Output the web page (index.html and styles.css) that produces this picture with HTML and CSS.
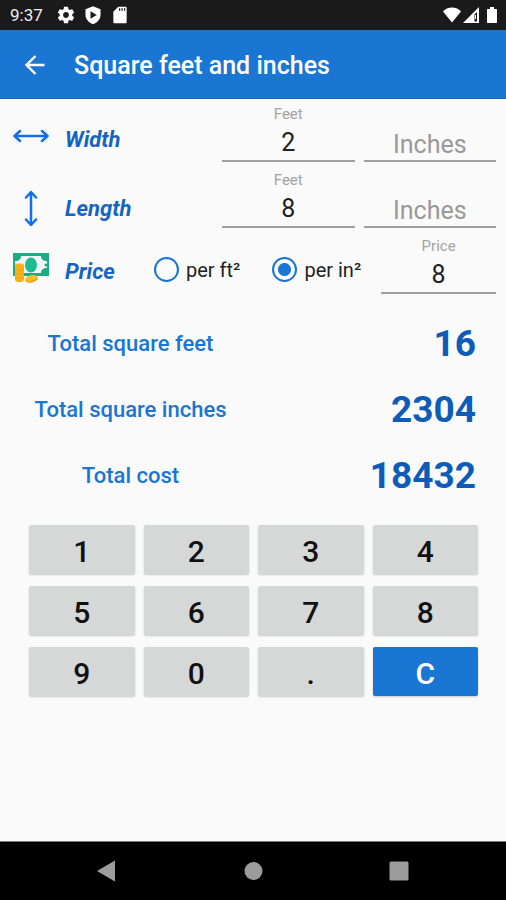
FILE: index.html
```html
<!DOCTYPE html>
<html lang="en">
<head>
<meta charset="utf-8">
<meta name="viewport" content="width=device-width, initial-scale=1">
<title>Square feet and inches</title>
<link rel="stylesheet" href="styles.css">
</head>
<body>
<div class="status">
  <span class="clock">9:37</span>
  <svg width="20" height="20" viewBox="0 0 24 24" fill="#fff" aria-hidden="true"><path d="M19.43 12.98c.04-.32.07-.64.07-.98s-.03-.66-.07-.98l2.11-1.65c.19-.15.24-.42.12-.64l-2-3.46c-.12-.22-.39-.3-.61-.22l-2.49 1c-.52-.4-1.08-.73-1.69-.98l-.38-2.65C14.46 2.18 14.25 2 14 2h-4c-.25 0-.46.18-.49.42l-.38 2.65c-.61.25-1.17.59-1.69.98l-2.49-1c-.23-.09-.49 0-.61.22l-2 3.46c-.13.22-.07.49.12.64l2.11 1.65c-.04.32-.07.65-.07.98s.03.66.07.98l-2.11 1.65c-.19.15-.24.42-.12.64l2 3.46c.12.22.39.3.61.22l2.49-1c.52.4 1.08.73 1.69.98l.38 2.65c.03.24.24.42.49.42h4c.25 0 .46-.18.49-.42l.38-2.65c.61-.25 1.17-.59 1.69-.98l2.49 1c.23.09.49 0 .61-.22l2-3.46c.12-.22.07-.49-.12-.64l-2.11-1.65zM12 15.500c-1.930 0-3.500-1.570-3.500-3.500s1.570-3.500 3.500-3.500 3.500 1.570 3.500 3.500-1.570 3.500-3.500 3.500z"/></svg>
  <svg width="20" height="20" viewBox="0 0 24 24" aria-hidden="true"><path fill="#fff" d="M12 1.500 3 5v7c0 5 3.800 9.200 9 11 5.200-1.800 9-6 9-11V5z"/><path fill="#1a1a1a" d="M9 7.500v9l7.500-4.500z"/></svg>
  <svg width="20" height="20" viewBox="0 0 24 24" aria-hidden="true"><path fill="#fff" d="M18.500 2H10L4 8v12.500c0 1 .8 1.500 1.700 1.500h12.800c.9 0 1.500-.6 1.500-1.500v-17c0-.9-.6-1.500-1.500-1.500z"/><path stroke="#1a1a1a" stroke-width="1.500" d="M11.500 4v3M14.500 4v3M17.500 4v3"/></svg>
  <span class="signals">
    <svg width="20" height="18" viewBox="0 0 20 18" aria-hidden="true"><path fill="#fff" d="M10 16.500 1 5.500C3 3 6.500 1.500 10 1.500S17 3 19 5.500z"/></svg>
    <svg width="17" height="18" viewBox="0 0 17 18" aria-hidden="true"><path fill="#fff" d="M0 17 16 1v16z"/><path fill="#1a1a1a" d="M11.500 8.500 14 6v9.500h-2.500z"/><path fill="#fff" d="M12 9h1v4h-1z"/></svg>
    <svg width="12" height="18" viewBox="0 0 12 18" aria-hidden="true"><path fill="#fff" d="M4 1h4v2h2c.6 0 1 .4 1 1v12c0 .6-.4 1-1 1H2c-.6 0-1-.4-1-1V4c0-.6.4-1 1-1h2z"/></svg>
  </span>
</div>

<header class="appbar">
  <button class="back" type="button" aria-label="Back">
    <svg width="20" height="20" viewBox="0 0 20 20" fill="none" stroke="#fff" stroke-width="2.400" aria-hidden="true"><path d="M19.500 10H2M10.500 1 1.500 10l9 9"/></svg>
  </button>
  <h1>Square feet and inches</h1>
</header>

<main>
  <form class="dimensions">
    <div class="row">
      <div class="head">
        <svg class="icon" viewBox="0 0 36 36" fill="none" stroke="#1070f0" stroke-width="2.500" stroke-linecap="round" stroke-linejoin="round" aria-hidden="true"><path d="M2 15h32M7 10l-5.500 5L7 20M29 10l5.500 5L29 20"/></svg>
        <h2>Width</h2>
      </div>
      <div class="field">
        <label for="wf">Feet</label>
        <input id="wf" type="text" value="2">
      </div>
      <div class="field">
        <input id="wi" class="empty" type="text" placeholder="Inches" aria-label="Width in inches">
      </div>
    </div>
    <div class="row row-length">
      <div class="head">
        <svg class="icon" viewBox="0 0 36 36" fill="none" stroke="#1070f0" stroke-width="2.500" stroke-linecap="round" stroke-linejoin="round" aria-hidden="true"><path d="M18 3v31M13 7.500l5-5.500 5 5.500M13 29.500l5 5.500 5-5.500"/></svg>
        <h2>Length</h2>
      </div>
      <div class="field">
        <label for="lf">Feet</label>
        <input id="lf" type="text" value="8">
      </div>
      <div class="field">
        <input id="li" class="empty" type="text" placeholder="Inches" aria-label="Length in inches">
      </div>
    </div>
    <div class="row row-price">
      <div class="head">
        <svg class="icon" viewBox="0 0 36 36" aria-hidden="true"><path fill="#1cab83" d="M0 0h36v23H0z"/><path fill="#f2f5f7" d="M8 3h20c0 3 2 5 6 5v7c-4 0-6 2-6 5H8c0-3-2-5-6-5V8c4 0 6-2 6-5z"/><ellipse cx="18" cy="12" rx="6" ry="7.500" fill="#1cbb90"/><circle cx="33" cy="12" r="1.500" fill="#1cab83"/><path fill="#fbb017" d="M2 12c1-2 8-2 9 0v15c-1 3-8 3-9 0z"/><path fill="none" stroke="#f3a213" d="M2 16c2 1.500 7 1.500 9 0M2 20c2 1.500 7 1.500 9 0M2 24c2 1.500 7 1.500 9 0"/><ellipse cx="18.500" cy="26" rx="6.500" ry="3.500" fill="#f3a213" transform="rotate(-14 18.500 26)"/><ellipse cx="18" cy="25" rx="6" ry="2.500" fill="#fdbf2d" transform="rotate(-14 18 25)"/></svg>
        <h2>Price</h2>
      </div>
      <div class="units">
        <label><input type="radio" name="unit">per ft²</label>
        <label><input type="radio" name="unit" checked>per in²</label>
      </div>
      <div class="field">
        <label for="pr">Price</label>
        <input id="pr" type="text" value="8">
      </div>
    </div>
  </form>

  <dl class="totals">
    <div><dt>Total square feet</dt><dd>16</dd></div>
    <div><dt>Total square inches</dt><dd>2304</dd></div>
    <div><dt>Total cost</dt><dd>18432</dd></div>
  </dl>

  <div class="keypad">
    <button type="button">1</button>
    <button type="button">2</button>
    <button type="button">3</button>
    <button type="button">4</button>
    <button type="button">5</button>
    <button type="button">6</button>
    <button type="button">7</button>
    <button type="button">8</button>
    <button type="button">9</button>
    <button type="button">0</button>
    <button type="button">.</button>
    <button type="button" class="clear">C</button>
  </div>
</main>

<nav class="sysnav" aria-label="System">
  <button type="button" aria-label="Back"><svg width="20" height="22" viewBox="0 0 20 22" aria-hidden="true"><path fill="#9c9c9c" d="M18 .5v21L0 11z"/></svg></button>
  <button type="button" aria-label="Home"><svg width="20" height="22" viewBox="0 0 20 22" aria-hidden="true"><circle cx="10.500" cy="11" r="9" fill="#9c9c9c"/></svg></button>
  <button type="button" aria-label="Recents"><svg width="20" height="22" viewBox="0 0 20 22" aria-hidden="true"><rect x=".5" y="1.500" width="19" height="19" rx="1.500" fill="#9c9c9c"/></svg></button>
</nav>
</body>
</html>
```
FILE: styles.css
```css
* {
  box-sizing: border-box;
}

body {
  margin: 0;
  min-height: 100vh;
  display: flex;
  flex-direction: column;
  background: #fafafa;
  color: #212121;
  font-family: Roboto, "Liberation Sans", sans-serif;
}

h1, h2, dl, dd {
  margin: 0;
}

button, input {
  font-family: inherit;
  border: 0;
  padding: 0;
}

.status {
  display: flex;
  align-items: center;
  gap: 7px;
  height: 30px;
  padding: 0 8px 0 10px;
  background: #1a1a1a;
}

.clock {
  margin-right: 6px;
  color: #eee;
  font-size: 17px;
}

.signals {
  display: flex;
  gap: 1px;
  margin-left: auto;
}

.signals svg:last-child {
  margin-left: 5px;
}

.appbar {
  display: flex;
  align-items: center;
  gap: 29px;
  height: 69px;
  padding: 2px 25px 0;
  background: #1976d2;
  border-bottom: 1px solid #1565c0;
}

.back {
  display: flex;
  background: none;
}

.appbar h1 {
  color: #fff;
  font-size: 25px;
  font-weight: 500;
}

main {
  flex: 1;
}

.row {
  display: flex;
  align-items: flex-start;
  gap: 9px;
  height: 66px;
  padding: 0 10px 0 13px;
}

.head {
  display: flex;
  align-items: center;
  gap: 16px;
  height: 66px;
  width: 200px;
  padding-top: 14px;
}

.row-length .head {
  padding-top: 20px;
}

.icon {
  width: 36px;
  height: 36px;
}

.head h2 {
  color: #1565c0;
  font-size: 22px;
  font-weight: 700;
  font-style: italic;
}

.field {
  flex: 1;
  display: flex;
  flex-direction: column;
  justify-content: flex-end;
  height: 63px;
}

.field label {
  margin-bottom: 2px;
  color: #a3a3a3;
  font-size: 15px;
  line-height: 18px;
  text-align: center;
}

.field input {
  width: 100%;
  height: 37px;
  padding-bottom: 1px;
  background: none;
  border-bottom: 2px solid #a0a0a0;
  border-radius: 0;
  color: #212121;
  font-size: 25px;
  text-align: center;
}

.field .empty {
  height: 33px;
}

.field input::placeholder {
  color: #999;
  opacity: 1;
}

.row-price .head {
  width: 132px;
}

.units {
  display: flex;
  align-items: center;
  gap: 32px;
  height: 66px;
  padding: 11px 11px 0 0;
}

.units label {
  display: flex;
  align-items: center;
  gap: 7px;
  font-size: 20px;
  white-space: nowrap;
}

.units input {
  appearance: none;
  width: 25px;
  height: 25px;
  margin: 0;
  border: 2px solid #1976d2;
  border-radius: 50%;
}

.units input:checked {
  background: radial-gradient(circle, #1976d2 6px, transparent 7px);
}

.totals {
  padding: 13px 30px 0 8px;
}

.totals div {
  display: flex;
  align-items: center;
  justify-content: space-between;
  height: 66px;
}

.totals dt {
  width: 245px;
  padding-top: 1px;
  color: #1976d2;
  font-size: 22px;
  font-weight: 500;
  text-align: center;
}

.totals dd {
  color: #0d5cb8;
  font-size: 37px;
  font-weight: 700;
}

.keypad {
  display: grid;
  grid-template-columns: repeat(4, 1fr);
  gap: 12px 9px;
  padding: 17px 28px 0 29px;
}

.keypad button {
  height: 49px;
  padding-top: 4px;
  background: #d6d7d7;
  border-radius: 2px;
  box-shadow: 0 1px 2px rgba(0, 0, 0, 0.2);
  color: #111;
  font-size: 30px;
  font-weight: 500;
}

.keypad .clear {
  background: #1976d2;
  color: #fff;
}

.sysnav {
  display: flex;
  justify-content: space-between;
  height: 59px;
  padding: 0 97px;
  background: #000;
  border-top: 1px solid #777;
}

.sysnav button {
  display: flex;
  align-items: center;
  background: none;
}
```
